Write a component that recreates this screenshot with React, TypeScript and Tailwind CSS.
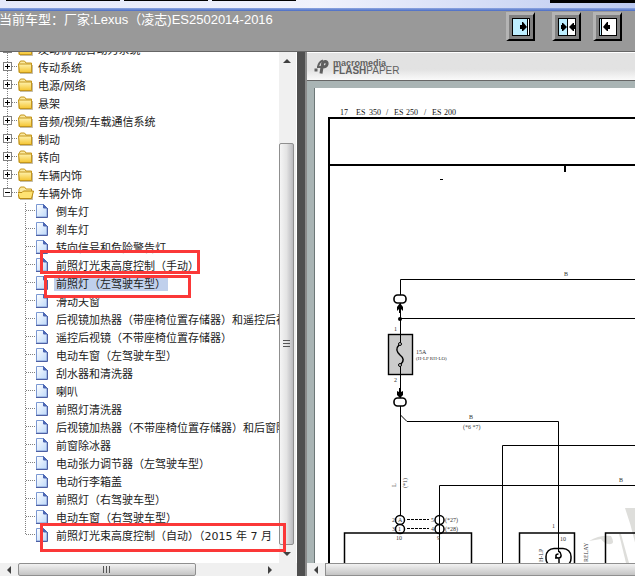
import { useState } from "react";
import { clsx } from "clsx";

const FOLDERS = [
  "发动机 混合动力系统",
  "传动系统",
  "电源/网络",
  "悬架",
  "音频/视频/车载通信系统",
  "制动",
  "转向",
  "车辆内饰",
];

const DOCUMENTS = [
  "倒车灯",
  "刹车灯",
  "转向信号和危险警告灯",
  "前照灯光束高度控制（手动）",
  "前照灯（左驾驶车型）",
  "滑动天窗",
  "后视镜加热器（带座椅位置存储器）和遥控后视镜",
  "遥控后视镜（不带座椅位置存储器）",
  "电动车窗（左驾驶车型）",
  "刮水器和清洗器",
  "喇叭",
  "前照灯清洗器",
  "后视镜加热器（不带座椅位置存储器）和后窗除雾器",
  "前窗除冰器",
  "电动张力调节器（左驾驶车型）",
  "电动行李箱盖",
  "前照灯（右驾驶车型）",
  "电动车窗（右驾驶车型）",
  "前照灯光束高度控制（自动）（2015 年 7 月",
];

function FolderIcon({ open }: { open?: boolean }) {
  return (
    <svg width="18" height="18" viewBox="0 1 18 18" className="shrink-0">
      <path d="M1 5.5 L2.5 3 H6.5 L8 5 H13.5 V14.5 H1Z" fill="#fbe9a0" stroke="#c4961c" />
      <path d="M2 15.5 H14.5 V7" fill="none" stroke="#8a7a50" strokeOpacity=".5" />
      {open ? (
        <path d="M1.5 14.5 L-0.5 8.5 H4 L5.5 7 H15.5 L13.5 14.5Z" fill="#ffe372" stroke="#b98a14" />
      ) : (
        <path d="M0.5 6 H13.5 V14.5 H1.5Z" fill="url(#folderFill)" stroke="#c4961c" />
      )}
    </svg>
  );
}

function PageIcon() {
  return (
    <svg width="18" height="18" className="shrink-0">
      <path d="M0.5 1.5 H7.5 L11 5 V14 H0.5Z" fill="url(#pageFill)" stroke="#7b98d2" />
      <path d="M11.5 5 V14.5 H0" fill="none" stroke="#4d5fa3" />
      <path d="M7.5 1.5 V5 H11Z" fill="#4b66b4" stroke="#4b66b4" />
    </svg>
  );
}

function Toggle({ open, label, onClick }: { open?: boolean; label: string; onClick?: () => void }) {
  return (
    <button type="button" onClick={onClick} aria-label={label} className="h-[18px] w-[18px] shrink-0">
      <svg width="18" height="18" className="block">
        <path d={open ? "M7.5 0 V4" : "M7.5 0 V18"} stroke="#808080" strokeDasharray="1 1" />
        <path d="M12 7.5 H18" stroke="#808080" strokeDasharray="1 1" />
        <rect x="3.5" y="3.5" width="8" height="8" fill="#fff" stroke="#808080" />
        <path d="M5 7.5 H10" stroke="#000" />
        {!open && <path d="M7.5 5 V10" stroke="#000" />}
      </svg>
    </button>
  );
}

function Branch({ last }: { last?: boolean }) {
  return (
    <svg width="36" height="18" className="shrink-0">
      <path d={last ? "M25.5 0 V8" : "M25.5 0 V18"} stroke="#808080" strokeDasharray="1 1" />
      <path d="M26 7.5 H36" stroke="#808080" strokeDasharray="1 1" />
    </svg>
  );
}

function Arrow({ dir }: { dir: "up" | "down" | "left" | "right" }) {
  const shapes = {
    up: "M4 0 L8 4 H0Z",
    down: "M0 0 H8 L4 4Z",
    left: "M4 0 V8 L0 4Z",
    right: "M0 0 L4 4 L0 8Z",
  };
  const wide = dir === "up" || dir === "down";
  return (
    <svg width={wide ? 8 : 4} height={wide ? 4 : 8}>
      <path d={shapes[dir]} fill="#404040" />
    </svg>
  );
}

function VerticalScroll() {
  return (
    <div className="flex w-[17px] shrink-0 flex-col bg-[#f0f0f0] pr-0.5">
      <button type="button" aria-label="向上滚动" className="flex h-[18px] items-center justify-center">
        <Arrow dir="up" />
      </button>
      <div className="grow-[73] basis-0" />
      <div className="flex grow-[402] basis-0 items-center justify-center rounded-xs border border-[#8f8f8f] bg-linear-to-r from-[#f5f5f5] via-[#e4e4e4] to-[#b9b9bd]">
        <div className="flex w-[7px] flex-col gap-0.5">
          <i className="h-px bg-[#555]" />
          <i className="h-px bg-[#555]" />
          <i className="h-px bg-[#555]" />
        </div>
      </div>
      <button type="button" aria-label="向下滚动" className="flex h-[18px] items-center justify-center">
        <Arrow dir="down" />
      </button>
    </div>
  );
}

function Grip() {
  return (
    <div className="flex h-[7px] gap-0.5">
      <i className="w-px bg-[#555]" />
      <i className="w-px bg-[#555]" />
      <i className="w-px bg-[#555]" />
    </div>
  );
}

function Sidebar() {
  const [expanded, setExpanded] = useState(true);
  const [selected, setSelected] = useState(4);

  return (
    <aside className="relative flex w-[297px] shrink-0 flex-col bg-white">
      <div className="flex min-h-0 grow">
        <div className="min-w-0 grow overflow-hidden">
          <ul className="-mt-[11px] font-['DejaVu_Sans','Noto_Sans_CJK_SC',sans-serif] text-[11px] leading-4 whitespace-nowrap text-[#222]">
            {FOLDERS.map((name) => (
              <li key={name} className="flex h-[18px]">
                <Toggle label={`展开 ${name}`} />
                <FolderIcon />
                <button type="button" className="px-0.5 pt-0.5">{name}</button>
              </li>
            ))}
            <li>
              <div className="flex h-[18px]">
                <Toggle open={expanded} label="车辆外饰" onClick={() => setExpanded(!expanded)} />
                <FolderIcon open />
                <button type="button" className="px-0.5 pt-0.5">车辆外饰</button>
              </div>
              {expanded && (
                <ul>
                  {DOCUMENTS.map((name, i) => (
                    <li key={name} className="flex h-[18px]">
                      <Branch last={i === DOCUMENTS.length - 1} />
                      <PageIcon />
                      <a
                        href="#"
                        onClick={() => setSelected(i)}
                        className={clsx("mt-0.5 h-3.5 px-0.5", i === selected && "bg-[#c0d0ec]")}
                      >
                        {name}
                      </a>
                    </li>
                  ))}
                </ul>
              )}
            </li>
          </ul>
        </div>
        <VerticalScroll />
        <div className="w-px shrink-0 bg-white" />
      </div>

      <div className="flex h-[13px] shrink-0 bg-[#f0f0f0] pr-[18px]">
        <button type="button" aria-label="向左滚动" className="flex w-[18px] items-center justify-center">
          <Arrow dir="left" />
        </button>
        <div className="flex grow-[177] basis-0 items-center justify-center rounded-xs border border-[#8f8f8f] bg-linear-to-b from-[#f2f2f2] to-[#c4c4c4]">
          <Grip />
        </div>
        <div className="grow-[66] basis-0" />
        <button type="button" aria-label="向右滚动" className="flex w-[18px] items-center justify-center">
          <Arrow dir="right" />
        </button>
      </div>

      {/* Highlight frames over the tree */}
      <div className="pointer-events-none absolute top-[198px] left-10 h-6 w-40 border-3 border-[#fb3838]" />
      <div className="pointer-events-none absolute top-[223px] left-11 h-[23px] w-[147px] border-3 border-[#fb3838]" />
      <div className="pointer-events-none absolute top-[471px] left-10 h-[29px] w-[246px] border-3 border-[#fb3838]" />
    </aside>
  );
}

function PaneButton({ label, className, split }: { label: string; className?: string; split: "right" | "middle" | "left" }) {
  return (
    <button
      type="button"
      aria-label={label}
      className={clsx(
        "flex size-[29px] items-center justify-center border-t-3 border-r-2 border-b-2 border-l-3 border-t-[#b4b4b4] border-r-black border-b-black border-l-[#b4b4b4] bg-[#808080]",
        className,
      )}
    >
      <svg width="18" height="18">
        <rect x="0.5" y="0.5" width="17" height="17" fill="#fff" stroke="#000" />
        {split === "right" && (
          <>
            <rect x="1" y="1" width="14" height="16" fill="#bdeeff" />
            <path d="M15.5 0 V18" stroke="#000" />
            <path d="M8 7 H10 V4 H11 L15 9 L11 13 H10 V11 H8Z" />
          </>
        )}
        {split === "middle" && (
          <>
            <rect x="1" y="1" width="8" height="16" fill="#bdeeff" />
            <path d="M9.5 0 V18" stroke="#000" />
            <path d="M3 7 H4 V5 H5 L9 9 L5 13 H4 V11 H3Z" />
            <path d="M17 7 H16 V5 H15 L11 9 L15 13 H16 V11 H17Z" />
          </>
        )}
        {split === "left" && (
          <>
            <rect x="1" y="1" width="2" height="16" fill="#bdeeff" />
            <path d="M2.5 0 V18" stroke="#000" />
            <path d="M11 7 H9 V4 H8 L4 9 L8 13 H9 V11 H11Z" />
          </>
        )}
      </svg>
    </button>
  );
}

function Header() {
  return (
    <header className="shrink-0">
      <div className="flex h-2 items-start justify-between bg-linear-to-r from-[#e4e8fa] via-[#f0f2fc] to-[#bccaf0]">
        <div className="flex gap-1 pl-1.5">
          <div className="h-px w-[114px] bg-black" />
          <div className="h-px w-[84px] bg-black" />
          <div className="h-px w-[84px] bg-black" />
        </div>
        <div className="h-[3px] w-[85px] bg-black" />
      </div>
      <div className="h-[3px] bg-linear-to-b from-[#8ea6e0] to-[#4a6cc4]" />
      <div className="flex h-10 items-start justify-between bg-[#999]">
        <h1 className="-ml-px font-['Liberation_Sans','Noto_Sans_CJK_SC',sans-serif] text-[13px] leading-[17px] font-normal whitespace-nowrap text-white">
          当前车型：厂家:Lexus（凌志)ES2502014-2016
        </h1>
        <div className="flex pt-px pr-[13px]">
          <PaneButton label="展开左侧" split="right" />
          <PaneButton label="并排显示" split="middle" className="ml-[17px]" />
          <PaneButton label="展开右侧" split="left" className="ml-3" />
        </div>
      </div>
      <div className="h-px bg-[#666]" />
    </header>
  );
}

const TITLE_WORDS: [number, string][] = [
  [25, "17"],
  [41, "ES"],
  [54, "350"],
  [71, "/"],
  [79, "ES"],
  [91, "250"],
  [109, "/"],
  [117, "ES"],
  [129, "200"],
];

function Connector({ y }: { y: number }) {
  return <rect x="79" y={y} width="12" height="8" rx="3.5" fill="#fff" stroke="#000" strokeWidth="1.6" />;
}

function Wiring() {
  return (
    <svg className="block size-full" fill="none" stroke="#000">
      {/* watermark */}
      <g fill="#dededb" stroke="none">
        <path d="M310 420 L420 420 V424 H322 L332 475 H324 Q319 445 310 420Z" />
        <path d="M274 453 Q284 447 296 448 Q300 455 296 456 Q290 457 286 451Z" />
        <path d="M304 446 H306 L314 475 H311Z" />
      </g>

      {/* sheet frame */}
      <path d="M14 475 V30 H4000" strokeWidth="2" />
      <path d="M14 77 H4000 M250 77 V84" strokeWidth="2" />
      <path d="M125 91.5 H128" />
      <g fill="#111" stroke="none" className="font-['Liberation_Serif',serif] text-[8px]">
        {TITLE_WORDS.map(([x, word]) => (
          <text key={x} x={x} y="27">{word}</text>
        ))}
      </g>

      {/* feed and fuse */}
      <path d="M85.5 207 V191.5 H4000" />
      <path d="M85.5 230.5 H4000 M85.5 215 V247" />
      <rect x="73.5" y="246.5" width="24" height="40" fill="#ccc" strokeWidth="1.4" />
      <path d="M85.5 247 V255 M85.5 278 V310" />
      <circle cx="85" cy="256" r="1.5" fill="#ccc" />
      <circle cx="85" cy="277" r="1.5" fill="#ccc" />
      <path d="M84 257 C80 261 82 264 85 267 C89 270 89 273 86 276" strokeWidth="1.5" />
      <path d="M85 215 L88 219 V223 L86 221 V225 H84 V221 L82 223 V219Z" fill="#000" stroke="none" />
      <path d="M85 310 L88 307 V303 L86 304 V300 H84 V304 L82 303 V307Z" fill="#000" stroke="none" />
      <circle cx="85" cy="231" r="2" fill="#000" stroke="none" />
      <Connector y={207} />
      <Connector y={310} />

      {/* harness */}
      <path d="M85.5 318 V428 M85.5 327 L92 333.5 H243.5 V464" />
      <path d="M187.5 475 V357.5 H4000" />
      <path d="M124.5 475 V397.5 H4000" />
      <path d="M92 431.5 H114 M92 440.5 H114" strokeDasharray="3 1" />
      <g strokeWidth="1.5">
        <circle cx="85" cy="432" r="4.5" fill="#fff" />
        <circle cx="85" cy="441" r="4.5" fill="#fff" />
        <circle cx="124.5" cy="432" r="4.5" />
        <circle cx="124.5" cy="441" r="4.5" />
        <path d="M29.5 475 V445 H156.5 V475" />
        <path d="M204.5 475 V445 H259.5 V475" />
        <path d="M290.5 475 V445 H4000" />
        <rect x="231" y="460.5" width="25" height="18" rx="8" />
        <path d="M243.5 463 C247 465 247 470 243.5 470 C240 470 240 466 243.5 466 M240 470 H244 V475" />
      </g>

      <g fill="#333" stroke="none" className="font-['Liberation_Serif',serif] text-[6px]">
        <text x="249" y="188">B</text>
        <text x="79" y="243">1</text>
        <text x="79" y="294">2</text>
        <text x="101" y="266">15A</text>
        <text x="101" y="272" className="text-[5px]">(H-LP RH-LO)</text>
        <text x="154" y="331">B</text>
        <text x="148" y="341">(*6 *7)</text>
        <text x="304" y="394">B</text>
        <text transform="translate(81 399) rotate(-90)">L</text>
        <text transform="translate(92 400) rotate(-90)">(*1)</text>
        <text x="77" y="434">2</text>
        <text x="77" y="443">3</text>
        <text x="83" y="434">A</text>
        <text x="83" y="443">1</text>
        <text x="116" y="434">5</text>
        <text x="116" y="443">4</text>
        <text x="130" y="434">(*27)</text>
        <text x="130" y="443">(*28)</text>
        <text x="81" y="452">10</text>
        <text x="122" y="452">9</text>
        <text x="237" y="440">1</text>
        <text x="245" y="453">10</text>
        <text transform="translate(228 474) rotate(-90)">H-LP</text>
        <text transform="translate(273 474) rotate(-90)">RELAY</text>
      </g>
    </svg>
  );
}

function Viewer() {
  return (
    <main className="flex min-w-0 grow flex-col border-l-2 border-[#8c8c8c] bg-[#a9b4b4]">
      <div className="flex h-[29px] shrink-0 items-center gap-1 border-t border-b border-t-white border-b-[#666] bg-linear-to-b from-[#e2e2e2] from-60% to-[#fafafa] pl-[7px] font-['Liberation_Sans',sans-serif] text-[10px] leading-2 text-[#606060]">
        <svg width="15" height="15" fill="none" stroke="#606060">
          <path d="M7 14.5 L8.5 5 Q9 2.5 11.5 2.5 Q13.5 3 13 5.5 Q12.5 8 8.5 8" strokeWidth="3" />
          <path d="M3 8 H7 M4 8 Q5 2.5 9 1.5" strokeWidth="2" />
          <path d="M0.500 11 H3.500" strokeWidth="3" />
        </svg>
        <div>
          <div className="text-[9px] font-bold">macromedia</div>
          <div>
            <b>FLASH</b>PAPER
          </div>
        </div>
      </div>
      <div className="min-h-0 grow overflow-hidden pt-[7px] pl-[7px]">
        <div className="h-full border-l border-[#6d7777] bg-white">
          <Wiring />
        </div>
      </div>
      <div className="flex h-[13px] shrink-0 bg-[#f0f0f0]">
        <button type="button" aria-label="向左滚动" className="flex w-[18px] items-center justify-center">
          <Arrow dir="left" />
        </button>
        <div className="grow border border-r-0 border-[#8f8f8f] bg-linear-to-b from-[#f2f2f2] to-[#c4c4c4]" />
      </div>
    </main>
  );
}

export default function App() {
  return (
    <div className="flex h-screen flex-col overflow-hidden bg-white">
      <svg width="0" height="0" className="absolute">
        <defs>
          <linearGradient id="folderFill" x1="0" y1="0" x2="0" y2="1">
            <stop offset="0" stopColor="#fff2ae" />
            <stop offset="1" stopColor="#f5c531" />
          </linearGradient>
          <linearGradient id="pageFill" x1="0" y1="0" x2="1" y2="1">
            <stop offset="0" stopColor="#fff" />
            <stop offset="1" stopColor="#bdd8fa" />
          </linearGradient>
        </defs>
      </svg>
      <Header />
      <div className="flex min-h-0 grow">
        <Sidebar />
        <div className="w-2 shrink-0 bg-[#4f4f4f]" />
        <Viewer />
      </div>
    </div>
  );
}
